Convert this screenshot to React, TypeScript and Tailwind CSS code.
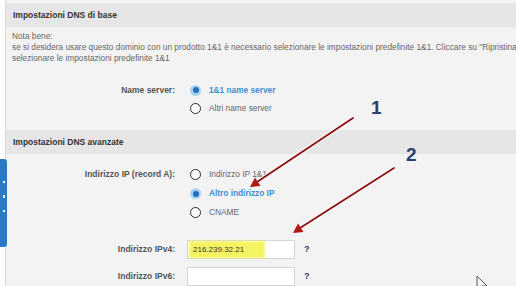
import React from 'react';

const Radio = ({ checked }: { checked?: boolean }) =>
  checked ? (
    <span className="w-[11px] h-[11px] rounded-full bg-[#a9d2f2] flex items-center justify-center shrink-0">
      <span className="block w-[6px] h-[6px] rounded-full bg-[#1f6fc2]" />
    </span>
  ) : (
    <span className="block w-[11px] h-[11px] rounded-full border-[1.5px] border-[#2b2b2b] bg-white shrink-0" />
  );

const RadioRow = ({ label, text, checked, h }: { label?: string; text: string; checked?: boolean; h: string }) => (
  <div className={`flex items-center ${h}`}>
    <div className="w-[169px] text-right font-bold text-[#555] text-[8.5px]">{label}</div>
    <div className="ml-[15px]">
      <Radio checked={checked} />
    </div>
    <span className={`ml-[8px] text-[8.3px] ${checked ? 'font-bold text-[#3d8dd0]' : 'text-[#666]'}`}>{text}</span>
  </div>
);

const InputRow = ({ label, value, marker }: { label: string; value?: string; marker?: boolean }) => (
  <div className="flex items-center h-[19px]">
    <div className="w-[169px] text-right font-bold text-[#555] text-[8.5px]">{label}</div>
    <div className="relative ml-[12px] w-[108px] h-[19px] bg-white border border-[#d4d4d4] flex items-center px-[5px] text-[8px] text-[#333]">
      {marker && <div className="absolute left-[1px] top-[0px] bottom-[0px] w-[76px] bg-[#f4f462] blur-[1px]" />}
      <span className="relative">{value}</span>
    </div>
    <span className="ml-[9px] text-[9px] font-bold text-[#27406b]">?</span>
  </div>
);

const App: React.FC = () => {
  return (
    <div className="relative w-[516px] h-[286px] overflow-hidden flex bg-[#f3f3f3] font-['Liberation_Sans',Arial,sans-serif]">
      <div className="w-[6px] shrink-0 bg-white border-r border-[#dadada]" />

      <div className="flex-1 pt-[3px] whitespace-nowrap">
        {/* base DNS settings */}
        <div className="h-[24px] bg-[#e6e6e6] flex items-center pl-[7px] text-[8.5px] font-bold text-[#333]">
          Impostazioni DNS di base
        </div>
        <div className="pl-[6px] pt-[4px] text-[8.3px] leading-[11px] text-[#666]">
          <p>Nota bene:</p>
          <p>se si desidera usare questo dominio con un prodotto 1&amp;1 è necessario selezionare le impostazioni predefinite 1&amp;1. Cliccare su "Ripristina"</p>
          <p>selezionare le impostazioni predefinite 1&amp;1</p>
        </div>
        <div className="mt-[17px]">
          <RadioRow h="h-[18px]" label="Name server:" text="1&1 name server" checked />
          <RadioRow h="h-[18px]" text="Altri name server" />
        </div>

        {/* advanced DNS settings */}
        <div className="mt-[13px] h-[24px] bg-[#e6e6e6] flex items-center pl-[7px] text-[8.5px] font-bold text-[#333]">
          Impostazioni DNS avanzate
        </div>
        <div className="mt-[11px]">
          <RadioRow h="h-[19px]" label="Indirizzo IP (record A):" text="Indirizzo IP 1&1" />
          <RadioRow h="h-[19px]" text="Altro indirizzo IP" checked />
          <RadioRow h="h-[19px]" text="CNAME" />
        </div>
        <div className="mt-[18px] flex flex-col gap-[8px]">
          <InputRow label="Indirizzo IPv4:" value="216.239.32.21" marker />
          <InputRow label="Indirizzo IPv6:" />
        </div>
      </div>

      {/* side tab */}
      <div className="absolute left-0 top-[159px] w-[7px] h-[88px] bg-[#2b7bc4] rounded-r-[3px] flex flex-col items-center pt-[22px] gap-[12px]">
        <span className="w-[2px] h-[2px] bg-white" />
        <span className="w-[2px] h-[3px] bg-white" />
        <span className="w-[2px] h-[2px] bg-white" />
      </div>

      {/* annotations */}
      <svg className="absolute inset-0 pointer-events-none" width="516" height="286">
        <g stroke="#ffffff" strokeOpacity="0.8" strokeWidth="4" strokeLinecap="round">
          <line x1="353" y1="118" x2="257" y2="182" />
          <line x1="394" y1="168" x2="300" y2="228" />
        </g>
        <g stroke="#8e1414" strokeWidth="2" strokeLinecap="round">
          <line x1="353" y1="118" x2="257" y2="182" />
          <line x1="394" y1="168" x2="300" y2="228" />
        </g>
        <polygon points="250,187 260.5,186 255,177.5" fill="#b01818" />
        <polygon points="293,233 303.5,232 298,223.5" fill="#b01818" />
        <path d="M477 276 L477 290 L480 287 L483 293 M477 276 L487 286 L482 286" fill="none" stroke="#555" strokeWidth="1" />
      </svg>
      <span className="absolute left-[371px] top-[98px] text-[19px] leading-[19px] font-bold text-[#26426c]">1</span>
      <span className="absolute left-[406px] top-[145px] text-[19px] leading-[19px] font-bold text-[#26426c]">2</span>
    </div>
  );
};

export default App;
